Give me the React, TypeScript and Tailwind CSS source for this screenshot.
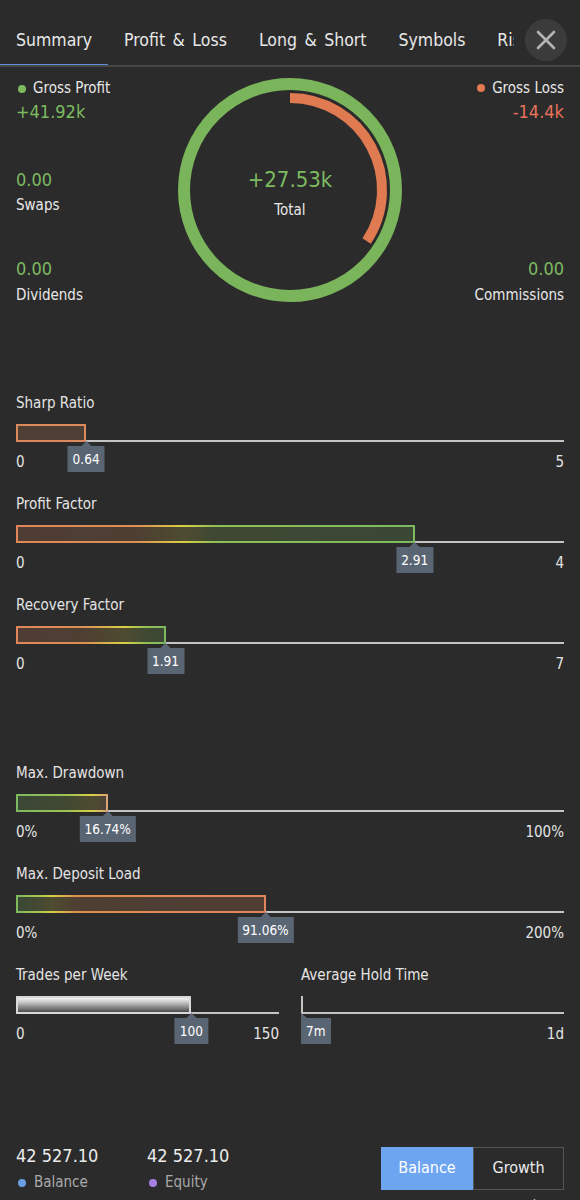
import type { ReactNode } from "react";

type Metric = {
  label: string;
  value: number;
  max: number;
  display: string;
  min: string;
  maxLabel: string;
  // border colours of the filled part, the fill is a dimmed copy
  gradient: string;
  align?: "center" | "start";
};

const GREEN = "text-[#7dbb60]";

const ratios: Metric[] = [
  {
    label: "Sharp Ratio",
    value: 0.64,
    max: 5,
    display: "0.64",
    min: "0",
    maxLabel: "5",
    gradient: "bg-[#dc8a5c]",
  },
  {
    label: "Profit Factor",
    value: 2.91,
    max: 4,
    display: "2.91",
    min: "0",
    maxLabel: "4",
    gradient:
      "bg-[linear-gradient(90deg,#e0855a_0%,#dc8f52_30%,#d8cf45_42%,#8fbf55_50%,#7cb95f_100%)]",
  },
  {
    label: "Recovery Factor",
    value: 1.91,
    max: 7,
    display: "1.91",
    min: "0",
    maxLabel: "7",
    gradient:
      "bg-[linear-gradient(90deg,#e0855a_0%,#dc8f52_45%,#d8cf45_72%,#8fbf55_88%,#7cb95f_100%)]",
  },
];

const risks: Metric[] = [
  {
    label: "Max. Drawdown",
    value: 16.74,
    max: 100,
    display: "16.74%",
    min: "0%",
    maxLabel: "100%",
    gradient:
      "bg-[linear-gradient(90deg,#7cb95f_0%,#9cc252_55%,#d8cf45_82%,#d9a27a_100%)]",
  },
  {
    label: "Max. Deposit Load",
    value: 91.06,
    max: 200,
    display: "91.06%",
    min: "0%",
    maxLabel: "200%",
    gradient:
      "bg-[linear-gradient(90deg,#7cb95f_0%,#a8c44e_9%,#d8cf45_14%,#dc9050_24%,#e0855a_100%)]",
  },
];

function Tip({ text, align = "center" }: { text: string; align?: "center" | "start" }) {
  return (
    <div
      className={
        align === "center"
          ? "absolute top-[4px] left-0 -translate-x-1/2 flex flex-col items-center"
          : "absolute top-[4px] left-0 flex flex-col items-start"
      }
    >
      <div
        className={
          align === "center"
            ? "w-0 h-0 border-l-[5px] border-r-[5px] border-b-[5px] border-l-transparent border-r-transparent border-b-[#5a6573] -mt-[5px]"
            : "w-0 h-0 border-r-[6px] border-b-[5px] border-r-transparent border-b-[#5a6573] -mt-[5px]"
        }
      />
      <div className="bg-[#5a6573] text-white text-[13.5px] leading-[26px] px-[5px] whitespace-nowrap">
        {text}
      </div>
    </div>
  );
}

function Gauge({ m }: { m: Metric }) {
  const pct = (m.value / m.max) * 100;
  return (
    <div>
      <div className="text-[15px] leading-5 text-[#e4e4e4]">{m.label}</div>
      <div className="mt-[11px] h-[18px] flex items-end">
        <div className={`h-full p-[2px] shrink-0 ${m.gradient}`} style={{ width: `${pct}%` }}>
          <div className="h-full w-full bg-[#2b2b2b]/80" />
        </div>
        <div className="flex-1 h-[2px] bg-[#c4c4c4]" />
      </div>
      <div className="relative mt-[10px] h-5 flex justify-between text-[15px] leading-5 text-[#e4e4e4]">
        <span>{m.min}</span>
        <span>{m.maxLabel}</span>
        <div className="absolute top-[-10px] h-0" style={{ left: `${pct}%` }}>
          <Tip text={m.display} align={m.align} />
        </div>
      </div>
    </div>
  );
}

function TradesGauge() {
  const pct = (100 / 150) * 100;
  return (
    <div>
      <div className="text-[15px] leading-5 text-[#e4e4e4]">Trades per Week</div>
      <div className="mt-[11px] h-[18px] flex items-end">
        <div
          className="h-full shrink-0 border-2 border-[#d8d8d8] bg-[linear-gradient(180deg,#f2f2f2_0%,#c8c8c8_30%,#8a8a8a_65%,#4c4c4c_100%)]"
          style={{ width: `${pct}%` }}
        />
        <div className="flex-1 h-[2px] bg-[#c4c4c4]" />
      </div>
      <div className="relative mt-[10px] h-5 flex justify-between text-[15px] leading-5 text-[#e4e4e4]">
        <span>0</span>
        <span>150</span>
        <div className="absolute top-[-10px] h-0" style={{ left: `${pct}%` }}>
          <Tip text="100" />
        </div>
      </div>
    </div>
  );
}

function HoldGauge() {
  return (
    <div>
      <div className="text-[15px] leading-5 text-[#e4e4e4]">Average Hold Time</div>
      <div className="mt-[11px] h-[18px] flex items-end">
        <div className="h-full w-[2px] shrink-0 bg-[#c4c4c4]" />
        <div className="flex-1 h-[2px] bg-[#c4c4c4]" />
      </div>
      <div className="relative mt-[10px] h-5 flex justify-end text-[15px] leading-5 text-[#e4e4e4]">
        <span>1d</span>
        <div className="absolute top-[-10px] left-0 h-0">
          <Tip text="7m" align="start" />
        </div>
      </div>
    </div>
  );
}

function Dot({ color }: { color: string }) {
  return <span className={`inline-block w-[8px] h-[8px] rounded-full ${color}`} />;
}

function Donut() {
  // gross loss share of the ring, 14.4k of 41.92k
  const angle = (14.4 / 41.92) * 2 * Math.PI;
  const r = 92;
  const ex = 112 + r * Math.sin(angle);
  const ey = 112 - r * Math.cos(angle);
  return (
    <div className="relative w-[224px] h-[224px]">
      <svg width="224" height="224" viewBox="0 0 224 224">
        <circle cx="112" cy="112" r="106" fill="none" stroke="#7ab55b" strokeWidth="12" />
        <path
          d={`M112 ${112 - r} A${r} ${r} 0 0 1 ${ex.toFixed(1)} ${ey.toFixed(1)}`}
          fill="none"
          stroke="#e07a50"
          strokeWidth="10"
        />
      </svg>
      <div className="absolute inset-0 flex flex-col items-center pt-[88px]">
        <div className={`text-[22px] leading-7 ${GREEN}`}>+27.53k</div>
        <div className="text-[15px] leading-5 mt-[6px] text-[#e8e8e8]">Total</div>
      </div>
    </div>
  );
}

function Amp() {
  return <span className="mx-[2.5px]">&amp;</span>;
}

function Tabs() {
  const tabs: ReactNode[] = [
    "Summary",
    <>Profit <Amp /> Loss</>,
    <>Long <Amp /> Short</>,
    "Symbols",
    "Risks",
  ];
  return (
    <div className="relative h-[67px] border-b-2 border-[#464646]">
      <div className="flex h-full w-[514px] overflow-hidden">
        {tabs.map((t, i) => (
          <div
            key={i}
            className="relative shrink-0 px-4 pt-[28px] text-[17.5px] leading-6 text-[#e8e8e8] whitespace-nowrap"
          >
            {t}
            {i === 0 && <div className="absolute left-0 right-0 -bottom-[2px] h-[3px] bg-[#5d91da]" />}
          </div>
        ))}
      </div>
      <button
        type="button"
        className="absolute right-[13px] top-[19px] w-[42px] h-[42px] rounded-full bg-[#3b3b3b] flex items-center justify-center"
      >
        <svg width="20" height="20" viewBox="0 0 20 20" stroke="#b4b4b4" strokeWidth="2.6" strokeLinecap="round">
          <path d="M2 2 L18 18 M18 2 L2 18" />
        </svg>
      </button>
    </div>
  );
}

function Row({ children }: { children: ReactNode }) {
  return <div className="flex items-center gap-[7px] text-[15px] leading-5 text-[#e8e8e8]">{children}</div>;
}

export default function App() {
  return (
    <div
      className="min-h-[1200px] bg-[#2b2b2b] text-white overflow-hidden"
      style={{ fontFamily: '"DejaVu Sans Condensed", "DejaVu Sans", sans-serif' }}
    >
      <Tabs />

      {/* summary */}
      <div className="px-4 pt-[11px] grid grid-cols-[1fr_224px_1fr]">
        <div className="flex flex-col">
          <Row>
            <span className="ml-[2px]"><Dot color="bg-[#7cb95f]" /></span>
            Gross Profit
          </Row>
          <div className={`text-[18px] leading-6 mt-[2px] ${GREEN}`}>+41.92k</div>
          <div className={`text-[18px] leading-6 mt-[44px] ${GREEN}`}>0.00</div>
          <div className="text-[15px] leading-5 mt-[3px] text-[#e8e8e8]">Swaps</div>
          <div className={`text-[18px] leading-6 mt-[42px] ${GREEN}`}>0.00</div>
          <div className="text-[15px] leading-5 mt-[4px] text-[#e8e8e8]">Dividends</div>
        </div>
        <Donut />
        <div className="flex flex-col items-end text-right">
          <Row>
            <Dot color="bg-[#e07a50]" />
            Gross Loss
          </Row>
          <div className="text-[18px] leading-6 mt-[2px] text-[#e8725a]">-14.4k</div>
          <div className={`text-[18px] leading-6 mt-[133px] ${GREEN}`}>0.00</div>
          <div className="text-[15px] leading-5 mt-[4px] text-[#e8e8e8]">Commissions</div>
        </div>
      </div>

      {/* ratios */}
      <div className="px-4 mt-[88px] flex flex-col gap-[22px]">
        {ratios.map((m) => (
          <Gauge key={m.label} m={m} />
        ))}
      </div>

      {/* risk */}
      <div className="px-4 mt-[89px] flex flex-col gap-[22px]">
        {risks.map((m) => (
          <Gauge key={m.label} m={m} />
        ))}
        <div className="grid grid-cols-2 gap-[22px]">
          <TradesGauge />
          <HoldGauge />
        </div>
      </div>

      {/* balance */}
      <div className="px-4 mt-[100px] flex items-center">
        <div className="w-[131px]">
          <div className="text-[18px] leading-6 text-[#ececec]">42 527.10</div>
          <div className="flex items-center gap-[8px] mt-[4px] text-[15px] leading-5 text-[#a9a9a9]">
            <span className="ml-[2px]"><Dot color="bg-[#6a9de2]" /></span>
            Balance
          </div>
        </div>
        <div>
          <div className="text-[18px] leading-6 text-[#ececec]">42 527.10</div>
          <div className="flex items-center gap-[8px] mt-[4px] text-[15px] leading-5 text-[#a9a9a9]">
            <span className="ml-[2px]"><Dot color="bg-[#a57ee6]" /></span>
            Equity
          </div>
        </div>
        <div className="ml-auto flex h-[43px] text-[16px]">
          <div className="w-[92px] flex items-center justify-center bg-[#6ea5f0] text-white">Balance</div>
          <div className="w-[91px] flex items-center justify-center border border-[#555] text-[#ececec]">Growth</div>
        </div>
      </div>
      <div className="text-right pr-[40px] mt-[3px] text-[14px] leading-5 text-[#d0d0d0]">20k</div>
    </div>
  );
}
